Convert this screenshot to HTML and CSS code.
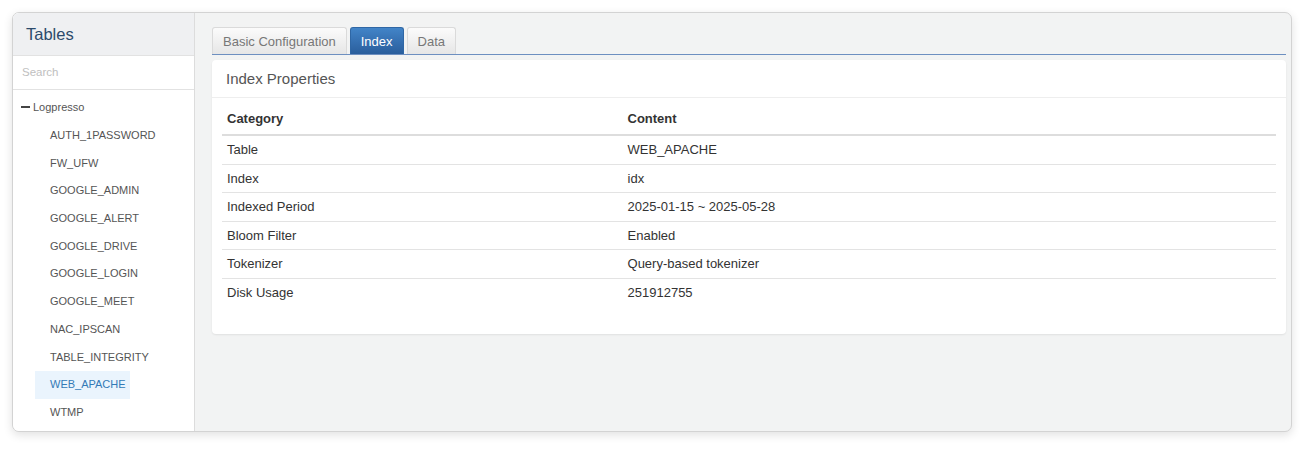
FILE: index.html
```html
<!DOCTYPE html>
<html lang="en">
<head>
    <meta charset="UTF-8">
    <title>Tables - Index</title>
    <link rel="stylesheet" href="styles.css">
</head>
<body>
    <div class="window">
        <aside class="sidebar">
            <div class="sidebar-title">Tables</div>
            <div class="search"><input type="text" placeholder="Search"></div>
            <div class="tree">
                <div class="tree-root"><span class="minus"></span>Logpresso</div>
                <ul class="tree-list">
                    <li>AUTH_1PASSWORD</li>
                    <li>FW_UFW</li>
                    <li>GOOGLE_ADMIN</li>
                    <li>GOOGLE_ALERT</li>
                    <li>GOOGLE_DRIVE</li>
                    <li>GOOGLE_LOGIN</li>
                    <li>GOOGLE_MEET</li>
                    <li>NAC_IPSCAN</li>
                    <li>TABLE_INTEGRITY</li>
                    <li class="active">WEB_APACHE</li>
                    <li>WTMP</li>
                </ul>
            </div>
        </aside>

        <main class="content">
            <ul class="tabs">
                <li>Basic Configuration</li>
                <li class="active">Index</li>
                <li>Data</li>
            </ul>

            <div class="panel">
                <div class="panel-heading">Index Properties</div>
                <div class="panel-body">
                    <table>
                        <thead>
                            <tr><th class="col-cat">Category</th><th>Content</th></tr>
                        </thead>
                        <tbody>
                            <tr><td>Table</td><td>WEB_APACHE</td></tr>
                            <tr><td>Index</td><td>idx</td></tr>
                            <tr><td>Indexed Period</td><td>2025-01-15 ~ 2025-05-28</td></tr>
                            <tr><td>Bloom Filter</td><td>Enabled</td></tr>
                            <tr><td>Tokenizer</td><td>Query-based tokenizer</td></tr>
                            <tr><td>Disk Usage</td><td>251912755</td></tr>
                        </tbody>
                    </table>
                </div>
            </div>
        </main>
    </div>
</body>
</html>
```

FILE: styles.css
```css
body {
    margin: 0;
    padding: 12px 23px 23px 12px;
    background-color: #fff;
    font-family: "Liberation Sans", Arial, sans-serif;
}
.window {
    display: flex;
    height: 420px;
    border: 1px solid #d3d3d3;
    border-radius: 7px;
    overflow: hidden;
    box-shadow: 0 3px 10px rgba(0,0,0,0.12);
    background-color: #f2f3f3;
    box-sizing: border-box;
}
.sidebar {
    width: 181px;
    flex-shrink: 0;
    background-color: #fff;
    border-right: 1px solid #dcdcdc;
}
.sidebar-title {
    height: 43px;
    line-height: 42px;
    padding-left: 13px;
    background-color: #eff0f2;
    border-bottom: 1px solid #e2e2e2;
    font-size: 16.5px;
    color: #2c4a6b;
    box-sizing: border-box;
}
.search {
    border-bottom: 1px solid #e2e2e2;
    height: 33px;
}
.search input {
    width: 100%;
    height: 32px;
    border: none;
    padding: 0 9px;
    box-sizing: border-box;
    font-family: inherit;
    font-size: 11.5px;
    color: #555;
    outline: none;
}
.search input::placeholder {
    color: #c0c0c0;
}
.tree {
    padding-top: 8px;
}
.tree-root {
    display: flex;
    align-items: center;
    height: 18px;
    padding-left: 8px;
    font-size: 11px;
    color: #555;
}
.minus {
    display: inline-block;
    width: 9px;
    height: 2px;
    background-color: #444;
    margin-right: 3px;
}
.tree-list {
    list-style: none;
    margin: 0;
    padding: 6px 0 0 22px;
}
.tree-list li {
    float: left;
    clear: both;
    height: 27.7px;
    line-height: 27.7px;
    padding: 0 4px 0 15px;
    font-size: 11px;
    color: #555;
}
.tree-list li.active {
    background-color: #eaf4fd;
    color: #337ab7;
}
.content {
    flex: 1;
    padding: 14px 5px 0 17px;
}
.tabs {
    list-style: none;
    margin: 0;
    padding: 0;
    display: flex;
    gap: 3px;
    border-bottom: 1px solid #6d8fc0;
}
.tabs li {
    height: 27px;
    line-height: 28px;
    padding: 0 10px;
    font-size: 13px;
    color: #777;
    border: 1px solid #dadada;
    border-bottom: none;
    border-radius: 3px 3px 0 0;
    background: linear-gradient(#fbfbfb, #e6e6e6);
    box-sizing: border-box;
}
.tabs li.active {
    color: #fff;
    border-color: #2f67a5;
    background: linear-gradient(#4284c8, #2a5e9c);
}
.panel {
    margin-top: 5px;
    background-color: #fff;
    border-radius: 4px;
    box-shadow: 0 1px 2px rgba(0,0,0,0.08);
    padding-bottom: 28px;
}
.panel-heading {
    height: 37px;
    line-height: 37px;
    padding-left: 14px;
    font-size: 15px;
    color: #555;
    border-bottom: 1px solid #eeeeee;
}
.panel-body {
    padding: 5px 10px 0 10px;
}
table {
    width: 100%;
    border-collapse: collapse;
    font-size: 13px;
    color: #333;
}
th {
    text-align: left;
    font-weight: bold;
    height: 31px;
    padding: 0 5px;
    border-bottom: 2px solid #ddd;
    vertical-align: middle;
}
.col-cat {
    width: 38%;
}
td {
    height: 27.5px;
    padding: 0 5px;
    border-top: 1px solid #e3e3e3;
    vertical-align: middle;
}
tbody tr:first-child td {
    border-top: none;
}
```
